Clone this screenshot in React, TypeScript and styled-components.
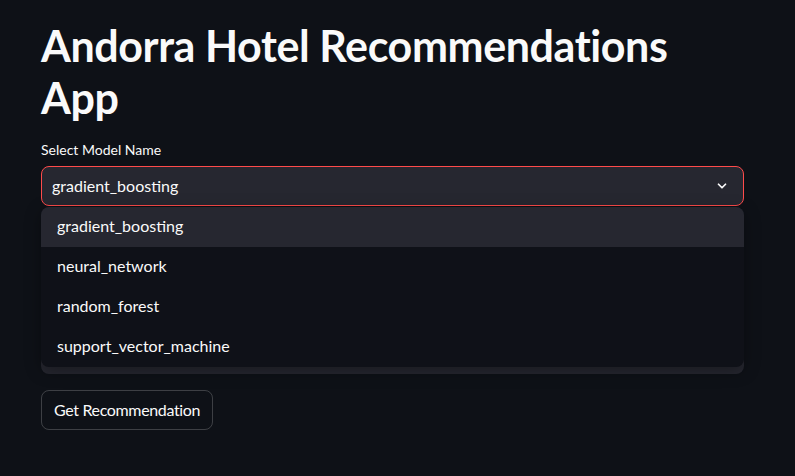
import React from "react";
import styled, { createGlobalStyle } from "styled-components";

const Global = createGlobalStyle`
  html, body { margin: 0; padding: 0; background: #0e1117; }
  body { font-family: "Lato", "Noto Sans", sans-serif; color: #fafafa; }
  * { box-sizing: border-box; }
`;

const Page = styled.main`
  min-height: 476px;
  padding: 20px 51px 0 41px;
  display: flex;
  flex-direction: column;
`;

const Title = styled.h1`
  margin: 0 0 16px;
  font-size: 43px;
  line-height: 52px;
  font-weight: 700;
  color: #fafafa;
  letter-spacing: -0.4px;
`;

const Field = styled.div`
  display: flex;
  flex-direction: column;
  margin-bottom: 16px;
  position: relative;
`;

const Label = styled.label`
  font-size: 14px;
  line-height: 20px;
  min-height: 20px;
  margin-bottom: 6px;
  color: #fafafa;
`;

const SelectBox = styled.div<{ $open?: boolean }>`
  height: 40px;
  display: flex;
  align-items: center;
  justify-content: space-between;
  padding: 0 14px 1px 10px;
  background: #262730;
  border: 1px solid ${(p) => (p.$open ? "#ff4b4b" : "transparent")};
  border-radius: 8px;
  font-size: 16px;
`;

const Chevron = styled.svg`
  width: 14px;
  height: 14px;
`;

const Menu = styled.ul`
  position: absolute;
  top: calc(100% + 1px);
  left: 0;
  right: 0;
  margin: 0;
  padding: 0;
  list-style: none;
  background: #0f1118;
  border-radius: 8px;
  overflow: hidden;
  box-shadow: 0 4px 16px rgba(0, 0, 0, 0.35);
  z-index: 10;
`;

const Option = styled.li<{ $active?: boolean }>`
  height: 40px;
  display: flex;
  align-items: center;
  padding: 0 0 3px 16px;
  font-size: 16px;
  background: ${(p) => (p.$active ? "#262730" : "transparent")};
`;

const HiddenBox = styled.div`
  height: 152px;
  background: #262730;
  border-radius: 8px;
  margin-bottom: 16px;
`;

const Button = styled.button`
  align-self: flex-start;
  height: 40px;
  padding: 0 12px 1px;
  background: transparent;
  border: 1px solid rgba(250, 250, 250, 0.2);
  border-radius: 8px;
  color: #fafafa;
  font-family: inherit;
  font-size: 16px;
  letter-spacing: -0.35px;
`;

const options = ["gradient_boosting", "neural_network", "random_forest", "support_vector_machine"];

export default function App() {
  return (
    <>
      <Global />
      <Page>
        <Title>Andorra Hotel Recommendations App</Title>
        <Field>
          <Label>Select Model Name</Label>
          <SelectBox $open>
            <span>gradient_boosting</span>
            <Chevron viewBox="0 0 24 24" fill="none" stroke="#fafafa" strokeWidth="3" strokeLinecap="round" strokeLinejoin="round">
              <path d="M6 9l6 6 6-6" />
            </Chevron>
          </SelectBox>
          <Menu>
            {options.map((o, i) => (
              <Option key={o} $active={i === 0}>{o}</Option>
            ))}
          </Menu>
        </Field>
        <HiddenBox />
        <Button>Get Recommendation</Button>
      </Page>
    </>
  );
}
